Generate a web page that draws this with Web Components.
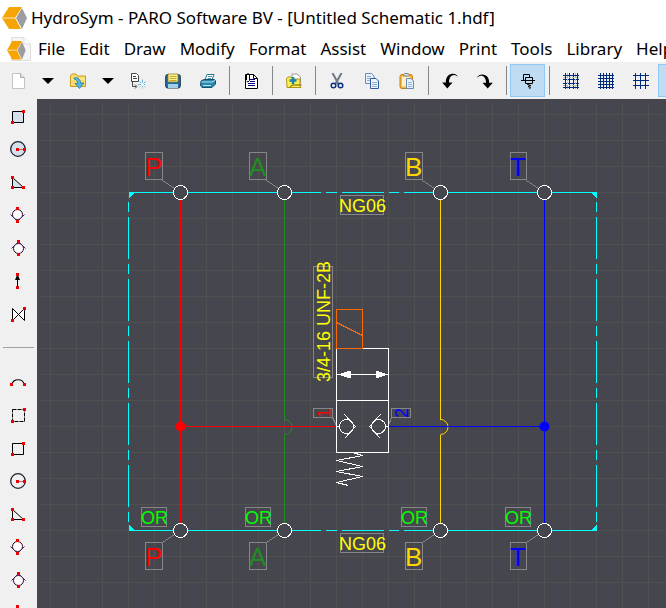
<!DOCTYPE html>
<html lang="en">
<head>
<meta charset="utf-8">
<title>HydroSym</title>
<style>
html, body { margin: 0; height: 100%; overflow: hidden; }
body { font-family: "Noto Sans", "Open Sans", sans-serif; color: #000; background: #fff; }
</style>
</head>
<body>
<hs-app></hs-app>
<script>
const define = (name, html, setup) => customElements.define(name, class extends HTMLElement {
  connectedCallback() {
    if (this.shadowRoot) return;
    this.attachShadow({ mode: 'open' }).innerHTML = html;
    if (setup) setup(this, this.shadowRoot);
  }
});

const red = (x, y) => `<rect x="${x - 1}" y="${y - 1}" width="3" height="3" fill="#e00" stroke="none"/>`;
const grid = (step, dotted) => {
  let s = '';
  for (let i = 2; i < 16; i += step) s += `<path d="M0 ${i}.5H16M${i}.5 0V16" stroke="#002a7a" fill="none"/>`;
  if (dotted) s += '<path d="M0 4.5H16M0 12.5H16M4.5 0V16M12.5 0V16" stroke="#b9b9a4" stroke-dasharray="2 1" fill="none"/>';
  return s;
};
const shapes = {
  rect: (f) => `<path d="M2.5 3.5H13.5V14.5H2.5Z" fill="${f}" stroke="#000"/>${red(13, 3)}${red(2, 14)}`,
  circle: (f) => `<circle cx="8" cy="8" r="7.3" fill="${f}" stroke="#1c2430" stroke-width="1.3"/><path d="M8 8.5H15" stroke="#b66"/>${red(7, 8)}${red(14, 8)}`,
  tri: (f) => `<path d="M2.5 3.5V13.5H13.5Z" fill="${f}" stroke="#000"/>${red(2, 3)}${red(2, 13)}${red(13, 13)}`
};
const icons = {
  new: '<path d="M2.5.5H10.500L14.500 4.500V15.500H2.500Z" fill="#fff" stroke="#c4c4c4"/><path d="M10.500.5V4.500H14.500" fill="#e4e4e4" stroke="#aaa"/>',
  arrow: '<path d="M2 5H14L8 11Z" fill="#000"/>',
  open: '<path d="M.5 13.500V2.500L2 1H6L7.500 3H15.500V13.500Z" fill="#f8dc6c" stroke="#c59b24"/><path d="M1 6H15" stroke="#fff2a8"/><path d="M4 5C8 4 10.500 6 10.500 10H14L9.500 15.500L5 10.500H7.500C8 8 6 6.500 4 6Z" fill="#56b7e4" stroke="#176e9e" stroke-width=".7"/>',
  import: '<path d="M1.500.5H6.500L8.500 2.500V8.500H1.500Z" fill="#fff" stroke="#444"/><path d="M3 3.500H6M3 5.500H7M2.500 9V13.500H6M5 11.500L7 13.500L5 15.500" fill="none" stroke="#444"/><path d="M12.500 6.500V15.500M8 11.500H16M9.500 8.500L15.500 14.500M15.500 8.500L9.500 14.500" stroke="#62b5dd" stroke-dasharray="3 1"/><circle cx="12.500" cy="11.500" r="1.500" fill="#fff"/>',
  save: '<rect x=".7" y="1.500" width="14.600" height="13.500" rx="2" fill="#286d9e" stroke="#17344d"/><path d="M3 1H13V9H3Z" fill="#fff08a" stroke="#806d22" stroke-width=".7"/><path d="M4.500 3.500H11.500M4.500 5.500H11.500M4.500 7.500H11.500" stroke="#c9a62c"/><rect x="3" y="11" width="10" height="4" fill="#9ed0ec"/>',
  print: '<path d="M5 7L7 1.500H14L12 7Z" fill="#fff" stroke="#267397"/><path d="M8 3.500H12M7.500 5.500H11" stroke="#267397" stroke-width=".8"/><path d="M1 8L4 6.500H14.500L15.500 8V11L12 14.500H2L.5 12.500Z" fill="#2889b0" stroke="#12516e"/><path d="M1.500 9H12L15 7.500M3 12.500H11" fill="none" stroke="#b8e3f3"/>',
  report: '<path d="M2.500 1.500H10.500L14.500 5.500V15.500H2.500Z" fill="#fff" stroke="#000"/><path d="M10.500 1.500V5.500H14.500" fill="none" stroke="#000"/><path d="M7 6.500H12M7 8.500H12M5 10.500H12M5 12.500H12" stroke="#000080"/><path d="M3.500 7V2L4.500.7H5.500L6.500 2V7.500L5 9L3.500 8" fill="none" stroke="#000"/>',
  add: '<path d="M6 8V1H11L14.500 4V10Z" fill="#fff" stroke="#999"/><path d="M.5 5.500L2 4H5L7 6H14V13L15 14.500H1Z" fill="#ffec50" stroke="#b09518"/><path d="M4 14.500L6 12H15.500" fill="none" stroke="#6c5c00"/><path d="M7 4V11M3.500 7.500H10.500" stroke="#1783b5" stroke-width="2.500"/>',
  cut: '<path d="M3.500 0L9.500 11M12.500 0L6.500 11" stroke="#707887" stroke-width="2"/><circle cx="4.500" cy="12.500" r="2.300" fill="none" stroke="#0c3484" stroke-width="1.500"/><circle cx="11.500" cy="12.500" r="2.300" fill="none" stroke="#0c3484" stroke-width="1.500"/>',
  copy: '<path d="M1.500.5H7.500L10 3V10.500H1.500Z" fill="#e7f1fd" stroke="#6f8cb9"/><path d="M3 3.500H7M3 5.500H7M3 7.500H6" stroke="#8eaed8"/><path d="M6.500 5.500H12L14.500 8V15.500H6.500Z" fill="#edf5ff" stroke="#355b98"/><path d="M8 9.500H13M8 11.500H13M8 13.500H13" stroke="#8eaed8"/>',
  paste: '<rect x="1" y="1.500" width="12.500" height="14" rx="2" fill="#f3b843" stroke="#c57e15"/><rect x="3" y="3.500" width="8" height="10" fill="#fff1c4"/><path d="M4.500 3V1.500L6 .5H9L10.500 1.500V3Z" fill="#ddd" stroke="#888"/><path d="M7.500 5.500H12L14.500 8V15.500H7.500Z" fill="#e7f2ff" stroke="#6b89b6"/><path d="M9 9.500H13M9 11.500H13M9 13.500H13" stroke="#98b5dd"/>',
  undo: '<path d="M16 4C15 1 12 .5 10 .8C5.500 1.500 3.800 5 3.800 9.500H.2L5.300 15.500L10.500 9.500H7C7 5 9 2 12 2C14 2 15 3 16 4Z" fill="#000"/>',
  redo: '<path d="M0 5C1 2 4 1.300 6 1.600C10.500 2.300 12.200 5.500 12.200 9.800H15.800L10.700 15.500L5.500 9.800H9C9 5.500 7 2.800 4 2.800C2 2.800 1 4 0 5Z" fill="#000"/>',
  symbol: '<path d="M1 7.500H15M3.500 7V1.500H9.500V4M5.500 4.500H12.500V10.500H5.500ZM9.500 10.500L7.500 11.500L11 12.500L8 13.500L10.500 14.500L9.500 16" fill="none" stroke="#000"/>',
  grid1: grid(4, true), grid2: grid(3), grid3: grid(5),
  rectf: shapes.rect('#d5e0eb'), recto: shapes.rect('#f0f0f0'),
  circlef: shapes.circle('#d5e0eb'), circleo: shapes.circle('#f0f0f0'),
  trif: shapes.tri('#d5e0eb'), trio: shapes.tri('#f0f0f0'),
  down: `<circle cx="7.500" cy="7.500" r="5" fill="#fff" stroke="#302"/><path d="M.5 7.500L7.500 14.500L14.500 7.500" fill="none" stroke="#426"/>${red(7, 1)}${red(7, 14)}`,
  up: `<circle cx="8.500" cy="8.500" r="5" fill="#fff" stroke="#302"/><path d="M1.500 8.500L8.500 1.500L15.500 8.500" fill="none" stroke="#426"/>${red(8, 1)}${red(8, 14)}`,
  line: `<path d="M7.500 2V14" stroke="#000"/><path d="M7.500 1L10 7H5Z" fill="#000"/>${red(7, 1)}${red(7, 14)}`,
  bow: `<path d="M2.500 2.500V14.500L14.500 2.500V14.500Z" fill="#fff" stroke="#000"/>${red(14, 2)}${red(2, 14)}`,
  arc: `<path d="M2 11C2 4 14 4 14 11" fill="none" stroke="#000" stroke-width="1.200"/>${red(1, 10)}${red(14, 10)}`,
  dash: `<path d="M2.500 2.500H14.500V14.500H2.500Z" fill="none" stroke="#000" stroke-dasharray="4 1"/>${red(14, 2)}${red(2, 14)}`
};

define('hs-icon', '<style>:host{display:block;width:16px;height:16px}svg{display:block}</style><svg width="16" height="16" viewBox="0 0 16 16" aria-hidden="true"></svg>',
  (el, root) => { root.querySelector('svg').innerHTML = icons[el.getAttribute('name')]; });

define('hs-tool', `<style>
:host{display:block;flex:none;width:35px;height:33px}
:host([narrow]){width:25px}
button{box-sizing:border-box;display:flex;align-items:center;justify-content:center;width:100%;height:100%;padding:0;margin:0;border:1px solid transparent;background:none}
button[aria-pressed=true]{background:#c0dcf3;border-color:#90c8f6}
</style><button type="button"></button>`, (el, root) => {
  const b = root.querySelector('button');
  b.setAttribute('aria-label', el.getAttribute('label') || el.getAttribute('icon'));
  if (el.hasAttribute('pressed')) b.setAttribute('aria-pressed', 'true');
  b.innerHTML = `<hs-icon name="${el.getAttribute('icon')}"></hs-icon>`;
});

define('hs-sep', `<style>
:host{display:flex;flex:none;justify-content:center;align-items:center;width:8px;height:29px}
:host::before{content:"";width:1px;height:100%;background:#868686}
:host([horizontal]){width:100%;height:35px}
:host([horizontal])::before{width:31px;height:1px;background:#a0a0a0}
</style>`);

const logo = '<path d="M7 0H20L13 11L19 22H7L0 11Z" fill="#f5a400"/><path d="M1 11H13M7 0" stroke="#fff" stroke-width=".8"/><path d="M20 1L25 11L20 22L14 11Z" fill="#9b9d9f"/>';

define('hs-titlebar', `<style>
:host{display:flex;align-items:center;gap:4px;height:36px;padding-left:2px;background:#fff}
svg{flex:none}
h1{margin:0;font-size:17px;line-height:24px;font-weight:400;white-space:nowrap}
</style><svg width="25" height="22" viewBox="0 0 25 22" aria-hidden="true">${logo}</svg><h1><slot></slot></h1>`);

define('hs-menubar', `<style>
:host{display:flex;align-items:center;height:26px;padding-left:7px;background:#fff;overflow:hidden}
svg{flex:none}
nav{display:flex;gap:14px;padding-left:7px}
button{flex:none;padding:0;border:0;background:none;color:inherit;font:inherit;font-size:17px;line-height:26px;white-space:nowrap}
</style><svg width="24" height="24" viewBox="0 0 24 24" aria-hidden="true"><path d="M4.500.5H17L23.500 7V23.500H4.500Z" fill="#f6f6f6" stroke="#ddd"/><path d="M17 .5V7H23.500" fill="#fff" stroke="#ddd"/><g transform="translate(0 4) scale(.75 .84)">${logo}</g></svg><nav></nav>`, (el, root) => {
  root.querySelector('nav').innerHTML = ['File', 'Edit', 'Draw', 'Modify', 'Format', 'Assist', 'Window', 'Print', 'Tools', 'Library', 'Help']
    .map(t => `<button type="button">${t}</button>`).join('');
});

const tool = (icon, extra = '') => `<hs-tool icon="${icon}" ${extra}></hs-tool>`;
const sep = '<hs-sep></hs-sep>';
define('hs-toolbar', `<style>:host{display:flex;align-items:center;height:37px;background:#f0f0f0;overflow:hidden}</style>
${tool('new')}${tool('arrow', 'narrow label="New options"')}${tool('open')}${tool('arrow', 'narrow label="Open options"')}${tool('import')}${tool('save')}${tool('print')}${sep}
${tool('report')}${sep}${tool('add')}${sep}${tool('cut')}${tool('copy')}${tool('paste')}${sep}${tool('undo')}${tool('redo')}${sep}
${tool('symbol', 'pressed')}${sep}${tool('grid1')}${tool('grid2')}${tool('grid3')}${tool('grid3', 'pressed')}`);

define('hs-sidebar', `<style>:host{display:flex;flex:none;flex-direction:column;width:37px;background:#f0f0f0;overflow:hidden}</style>
${['rectf', 'circlef', 'trif', 'down', 'up', 'line', 'bow'].map(n => tool(n)).join('')}<hs-sep horizontal></hs-sep>
${['arc', 'dash', 'recto', 'circleo', 'trio', 'down', 'up', 'line'].map(n => tool(n)).join('')}`);

const ports = [['P', 180, 145, 17, '#f00'], ['A', 284, 249, 17, '#228b22'], ['B', 440, 405, 17, '#ffd700'], ['T', 544, 510, 16, '#00f']];
let lines = '', texts = '';
for (const [t, x, bx, w, c] of ports) {
  lines += `<path stroke="#868686" d="M${bx} 152h${w}v27h-${w}ZM${bx} 542h${w}v27h-${w}ZM${bx + w} 180L${x - 6} 188M${bx + w} 542L${x - 6} 534M${x - 39} 507h25v19h-25Z"/>`;
  lines += (t === 'P' || t === 'T') ? `<path stroke="${c}" d="M${x} 192V530"/>`
    : `<path stroke="${c}" d="M${x} 192V419M${x} 434V530"/><path stroke="${c}" shape-rendering="auto" d="M${x} 419A7 7 0 0 1 ${x} 434"/>`;
  texts += `<text x="${bx}" y="176" font-size="26" fill="${c}">${t}</text><text x="${bx}" y="566" font-size="26" fill="${c}">${t}</text><text x="${x - 39}" y="524" fill="#0f0">OR</text>`;
}
const circles = ports.map(([, x]) => `<circle cx="${x}" cy="192" r="7"/><circle cx="${x}" cy="530" r="7"/>`).join('');
const edge = 'H320M325 YH336M341 YH383M388 YH398M403 YH596';

define('hs-schematic', `<style>
:host{display:block;flex:1;min-width:0;background:#46464f;overflow:hidden}
svg{display:block;width:100%;height:100%}
text{font-family:"Liberation Sans",Arial,sans-serif;font-size:18px}
text[font-size="26"]{font-size:26px}
</style><svg role="img" aria-label="Hydraulic schematic" fill="none">
<defs><pattern id="g" x="13" y="15" width="26" height="26" patternUnits="userSpaceOnUse"><path d="M0 0H26V1H1V26H0Z" fill="#505050"/></pattern></defs>
<rect x="4" y="4" width="100%" height="100%" fill="url(#g)"/>
<g transform="translate(-36.5 -98.5)" shape-rendering="crispEdges" stroke-width="1">
<path stroke="#0ff" d="M128 192${edge.replace(/Y/g, '192')}M128 530${edge.replace(/Y/g, '530')}"/>
<path stroke="#0ff" stroke-dasharray="10 5 42 5" d="M128 201V524M596 201V524"/>
<path fill="#0ff" d="M128 192h6l-6 6ZM596 192h-6l6 6ZM128 530h6l-6-6ZM596 530h-6l6-6Z"/>
${lines}
<path stroke="#868686" d="M340 195H383V214H340ZM340 533H383V552H340ZM313 266H332V377H313ZM313 408H332V417H313ZM391 408H410V417H391ZM332 417L336 425M391 417L388 425"/>
<path stroke="#f00" d="M180 426H336"/><path stroke="#00f" d="M388 426H544"/>
<g shape-rendering="auto"><circle cx="180" cy="426" r="5" fill="#f00"/><circle cx="544" cy="426" r="5" fill="#00f"/></g>
<path stroke="#fff" d="M336 348H388V452H336ZM336 400H388M336 374H388"/>
<path fill="#fff" d="M337 374L350 370V378ZM388 374L375 370V378Z"/>
<path stroke="#ff6a00" d="M336 309H362V348H336ZM336 322L362 335"/>
<g stroke="#fff"><g fill="#46464f">${circles}</g>
<circle cx="346" cy="426" r="7"/><circle cx="378" cy="426" r="7"/>
<path d="M344 414L355 426L344 438M380 414L369 426L380 438M385 426H388M336 426H339M352 452L362 455L336 460L362 466L336 471L362 476L336 482L348 485"/></g>
</g>
<g transform="translate(-37 -99)">${texts}
<g fill="#ff0"><text x="339" y="212">NG06</text><text x="339" y="550">NG06</text><text transform="translate(330 382) rotate(-90)">3/4-16 UNF-2B</text></g>
<text transform="translate(330 418) rotate(-90)" fill="#f00">1</text><text transform="translate(408 418) rotate(-90)" fill="#00f">2</text></g>
</svg>`);

define('hs-app', `<style>
:host{display:flex;flex-direction:column;height:100vh}
main{display:flex;flex:1;min-height:0}
hs-titlebar,hs-menubar,hs-toolbar{flex:none}
</style><hs-titlebar>HydroSym - PARO Software BV - [Untitled Schematic 1.hdf]</hs-titlebar><hs-menubar></hs-menubar><hs-toolbar></hs-toolbar>
<main><hs-sidebar></hs-sidebar><hs-schematic></hs-schematic></main>`);
</script>
</body>
</html>
